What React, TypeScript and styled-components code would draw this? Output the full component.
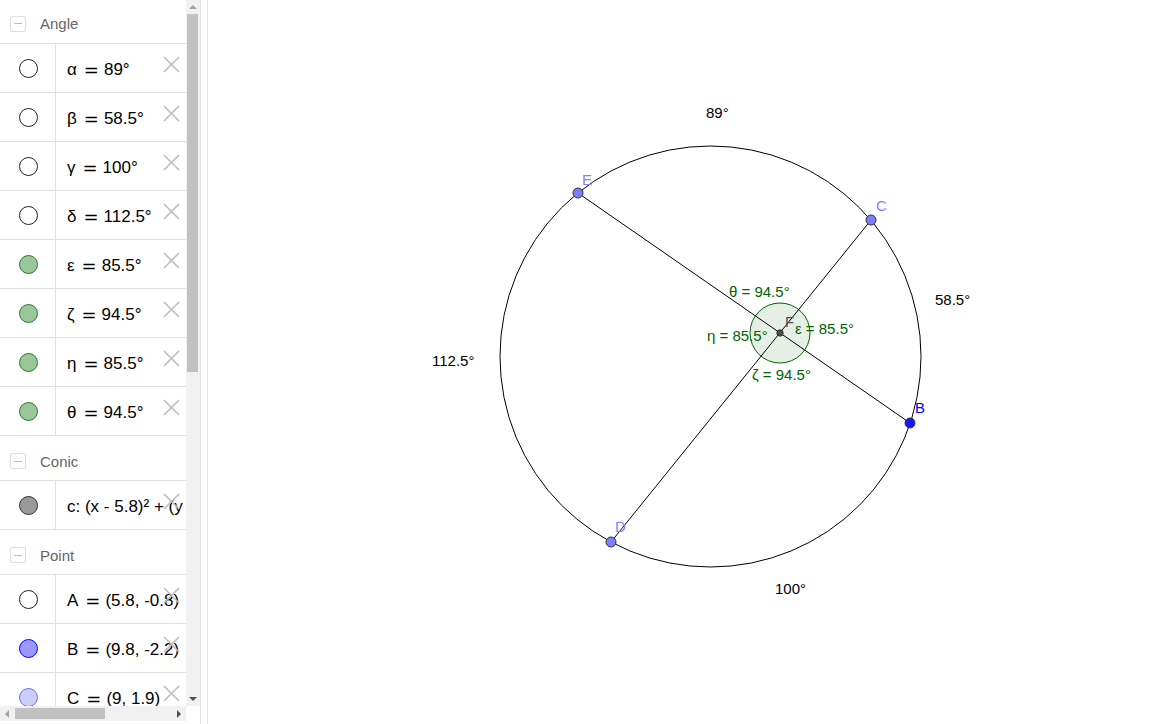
import React from "react";
import styled, { createGlobalStyle } from "styled-components";

const GlobalStyle = createGlobalStyle`
  html, body, #root {
    margin: 0;
    padding: 0;
    height: 100%;
    background: #fff;
    overflow: hidden;
  }
  body {
    font-family: "Liberation Sans", Arial, sans-serif;
  }
`;

type Swatch = { fill: string; stroke: string };

const WHITE: Swatch = { fill: "#fff", stroke: "#222" };
const GREEN: Swatch = { fill: "#99c799", stroke: "#2b7a2b" };
const GRAY: Swatch = { fill: "#999", stroke: "#333" };
const BLUE: Swatch = { fill: "#9999ff", stroke: "#0000ff" };
const LIGHT_BLUE: Swatch = { fill: "#ccccff", stroke: "#7070e0" };

// name + value are shown as "name = value"; text is shown as is
type Item = { name?: string; value?: string; text?: string; swatch: Swatch };
type Group = { title: string; items: Item[] };

const groups: Group[] = [
  {
    title: "Angle",
    items: [
      { name: "α", value: "89°", swatch: WHITE },
      { name: "β", value: "58.5°", swatch: WHITE },
      { name: "γ", value: "100°", swatch: WHITE },
      { name: "δ", value: "112.5°", swatch: WHITE },
      { name: "ε", value: "85.5°", swatch: GREEN },
      { name: "ζ", value: "94.5°", swatch: GREEN },
      { name: "η", value: "85.5°", swatch: GREEN },
      { name: "θ", value: "94.5°", swatch: GREEN },
    ],
  },
  {
    title: "Conic",
    items: [{ text: "c: (x - 5.8)² + (y + 0.8)² = 18", swatch: GRAY }],
  },
  {
    title: "Point",
    items: [
      { name: "A", value: "(5.8, -0.8)", swatch: WHITE },
      { name: "B", value: "(9.8, -2.2)", swatch: BLUE },
      { name: "C", value: "(9, 1.9)", swatch: LIGHT_BLUE },
    ],
  },
];

const Page = styled.div`
  display: flex;
  flex-direction: row;
  height: 100vh;
  width: 100vw;
`;

const SidePanel = styled.div`
  display: flex;
  flex-direction: column;
  width: 200px;
  flex-shrink: 0;
  padding-bottom: 3px;
  box-sizing: border-box;
`;

const PanelBody = styled.div`
  display: flex;
  flex-direction: row;
  flex: 1;
  min-height: 0;
`;

const List = styled.div`
  width: 186px;
  overflow: hidden;
  display: flex;
  flex-direction: column;
`;

const GroupHeader = styled.div<{ $first?: boolean }>`
  display: flex;
  align-items: center;
  gap: 14px;
  height: ${p => (p.$first ? 44 : 45)}px;
  padding-left: 10px;
  padding-top: ${p => (p.$first ? 4 : 6)}px;
  box-sizing: border-box;
  border-bottom: 1px solid #e0e0e0;
  color: #666;
  font-size: 15px;
  flex-shrink: 0;
`;

const Collapse = styled.span`
  display: flex;
  align-items: center;
  justify-content: center;
  width: 14px;
  height: 14px;
  border: 1px solid #ddd;
  border-radius: 2px;

  &::before {
    content: "";
    width: 8px;
    height: 1px;
    background: #bbb;
  }
`;

const Row = styled.div`
  position: relative;
  display: flex;
  flex-direction: row;
  height: 49px;
  border-bottom: 1px solid #e0e0e0;
  box-sizing: border-box;
  flex-shrink: 0;
`;

const MarbleCell = styled.div`
  width: 56px;
  display: flex;
  align-items: center;
  justify-content: center;
  border-right: 1px solid #e0e0e0;
  flex-shrink: 0;
  padding-left: 1px;
  box-sizing: border-box;
`;

const Marble = styled.span<{ $fill: string; $stroke: string }>`
  width: 17px;
  height: 17px;
  border-radius: 50%;
  background: ${p => p.$fill};
  border: 1px solid ${p => p.$stroke};
`;

const Formula = styled.div`
  display: flex;
  align-items: center;
  padding-left: 11px;
  padding-top: 3px;
  font-size: 17px;
  color: #000;
  white-space: nowrap;
`;

const Eq = styled.span`
  font-family: "DejaVu Sans", sans-serif;
  font-size: 18px;
  line-height: 1;
  margin: 0 5px 0 7px;
`;

const Delete = styled.span`
  position: absolute;
  left: 163px;
  top: 12px;
  width: 17px;
  height: 17px;
  display: flex;
`;

const VScroll = styled.div`
  width: 14px;
  display: flex;
  flex-direction: column;
  background: #f1f1f1;
`;

const ArrowBox = styled.div`
  height: 14px;
  display: flex;
  align-items: center;
  justify-content: center;
  flex-shrink: 0;
`;

const Arrow = styled.span<{ $dir: "up" | "down" | "left" | "right" }>`
  width: 0;
  height: 0;
  border: 4px solid transparent;
  ${p =>
    p.$dir === "up"
      ? "border-bottom-color: #a3a3a3; border-top-width: 0;"
      : p.$dir === "down"
      ? "border-top-color: #505050; border-bottom-width: 0;"
      : p.$dir === "left"
      ? "border-right-color: #a3a3a3; border-left-width: 0;"
      : "border-left-color: #505050; border-right-width: 0;"}
`;

const VTrack = styled.div`
  flex: 1;
  display: flex;
  flex-direction: column;
  padding: 0 2px 0 1px;
`;

const VThumb = styled.div`
  height: 358px;
  background: #c1c1c1;
`;

const HScrollRow = styled.div`
  display: flex;
  flex-direction: row;
  height: 15px;
  flex-shrink: 0;
`;

const HScroll = styled.div`
  width: 186px;
  display: flex;
  flex-direction: row;
  background: #f1f1f1;
`;

const HArrowBox = styled.div`
  width: 14px;
  display: flex;
  align-items: center;
  justify-content: center;
  flex-shrink: 0;
`;

const HTrack = styled.div`
  flex: 1;
  display: flex;
  align-items: center;
  padding-left: 1px;
`;

const HThumb = styled.div`
  width: 90px;
  height: 11px;
  background: #c1c1c1;
`;

const Splitter = styled.div`
  width: 8px;
  flex-shrink: 0;
  border-left: 1px solid #e4e4e4;
  border-right: 1px solid #e8e8e8;
  box-sizing: border-box;
  background: #fff;
`;

const Canvas = styled.div`
  flex: 1;
  position: relative;
  overflow: hidden;
`;

const Plot = styled.svg`
  display: block;
  width: 100%;
  height: 100%;
  font-family: "Liberation Sans", Arial, sans-serif;
`;

const CrossIcon = () => (
  <svg width="17" height="17" viewBox="0 0 17 17">
    <path d="M1 1 L16 16 M16 1 L1 16" stroke="#bdbdbd" strokeWidth="1.6" fill="none" />
  </svg>
);

const Sidebar = () => (
  <SidePanel>
    <PanelBody>
      <List>
        {groups.map((g, gi) => (
          <React.Fragment key={g.title}>
            <GroupHeader $first={gi === 0}>
              <Collapse />
              {g.title}
            </GroupHeader>
            {g.items.map(it => (
              <Row key={it.name ?? it.text}>
                <MarbleCell>
                  <Marble $fill={it.swatch.fill} $stroke={it.swatch.stroke} />
                </MarbleCell>
                <Formula>
                  {it.text ?? (
                    <>
                      {it.name}
                      <Eq>=</Eq>
                      {it.value}
                    </>
                  )}
                </Formula>
                <Delete>
                  <CrossIcon />
                </Delete>
              </Row>
            ))}
          </React.Fragment>
        ))}
      </List>
      <VScroll>
        <ArrowBox>
          <Arrow $dir="up" />
        </ArrowBox>
        <VTrack>
          <VThumb />
        </VTrack>
        <ArrowBox>
          <Arrow $dir="down" />
        </ArrowBox>
      </VScroll>
    </PanelBody>
    <HScrollRow>
      <HScroll>
        <HArrowBox>
          <Arrow $dir="left" />
        </HArrowBox>
        <HTrack>
          <HThumb />
        </HTrack>
        <HArrowBox>
          <Arrow $dir="right" />
        </HArrowBox>
      </HScroll>
    </HScrollRow>
  </SidePanel>
);

// page coordinates of the construction
const O = { x: 710.5, y: 356.5, r: 210.5 };
const E = { x: 578, y: 193 };
const C = { x: 871, y: 220 };
const B = { x: 910, y: 423 };
const D = { x: 611, y: 542 };
const F = { x: 780, y: 333 };

const GREEN_TEXT = "#006400";
const POINT_FILL = "#7d7dff";

const Graphics = () => (
  <Canvas>
    <Plot>
      <g transform="translate(-208,0)">
        <circle cx={O.x} cy={O.y} r={O.r} fill="none" stroke="#000" strokeWidth="1" />
        <circle cx={F.x} cy={F.y} r={30} fill="rgba(0,100,0,0.1)" stroke="#006400" strokeWidth="1" />
        <line x1={E.x} y1={E.y} x2={B.x} y2={B.y} stroke="#000" strokeWidth="1" />
        <line x1={C.x} y1={C.y} x2={D.x} y2={D.y} stroke="#000" strokeWidth="1" />

        <g fontSize="15" fill="#000">
          <text x="706" y="118">89°</text>
          <text x="935" y="305">58.5°</text>
          <text x="775" y="594">100°</text>
          <text x="432" y="366">112.5°</text>
        </g>

        <g fontSize="15" fill={GREEN_TEXT}>
          <text x="729" y="297">θ = 94.5°</text>
          <text x="795" y="334">ε = 85.5°</text>
          <text x="707" y="341">η = 85.5°</text>
          <text x="752" y="380">ζ = 94.5°</text>
        </g>

        <circle cx={E.x} cy={E.y} r="5" fill={POINT_FILL} stroke="#333" strokeWidth="1" />
        <circle cx={C.x} cy={C.y} r="5" fill={POINT_FILL} stroke="#333" strokeWidth="1" />
        <circle cx={D.x} cy={D.y} r="5" fill={POINT_FILL} stroke="#333" strokeWidth="1" />
        <circle cx={B.x} cy={B.y} r="5" fill="#1515ff" stroke="#333" strokeWidth="1" />
        <circle cx={F.x} cy={F.y} r="3.2" fill="#4d4d4d" stroke="#222" strokeWidth="0.8" />

        <g fontSize="15">
          <text x="582" y="185" fill="#8080ff">E</text>
          <text x="876" y="211" fill="#8080ff">C</text>
          <text x="915" y="413" fill="#0000ff">B</text>
          <text x="615" y="532" fill="#8080ff">D</text>
          <text x="785" y="327" fill="#555">F</text>
        </g>
      </g>
    </Plot>
  </Canvas>
);

export default function App() {
  return (
    <>
      <GlobalStyle />
      <Page>
        <Sidebar />
        <Splitter />
        <Graphics />
      </Page>
    </>
  );
}
